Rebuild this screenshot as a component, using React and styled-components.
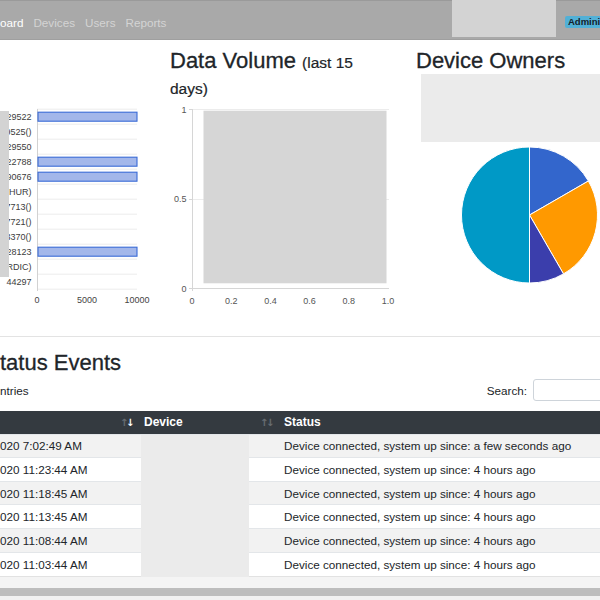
import React from 'react';
import styled, { createGlobalStyle } from 'styled-components';

const GlobalStyle = createGlobalStyle`
  html, body { margin: 0; padding: 0; background: #ffffff; overflow: hidden; }
  body {
    font-family: "Liberation Sans", Arial, Helvetica, sans-serif;
    color: #212529;
    width: 600px;
    height: 600px;
  }
  * { box-sizing: border-box; }
`;

const Page = styled.div`
  width: 600px;
  height: 600px;
  overflow: hidden;
`;

/* ---------- Navbar ---------- */
const Nav = styled.nav`
  display: flex;
  align-items: flex-start;
  height: 40px;
  background: #a9a9a9;
  border-top: 1px solid #9a9a9a;
  border-bottom: 1px solid #9f9f9f;
`;

const NavLinks = styled.div`
  flex: 1;
  display: flex;
  gap: 10px;
  align-items: center;
  height: 100%;
  padding-top: 4px;
  font-size: 11.7px;
  white-space: nowrap;
`;

const NavLink = styled.span`
  color: ${(p) => (p.$active ? '#ffffff' : '#d4d4d4')};
`;

const NavRight = styled.div`
  width: 148px;
  flex-shrink: 0;
  display: flex;
  align-items: flex-start;
  height: 100%;
`;

const NavRedaction = styled.div`
  width: 104px;
  height: 37px;
  margin-top: -1px;
  background: #d3d3d3;
  flex-shrink: 0;
`;

const Badge = styled.span`
  margin-left: 9px;
  margin-top: 15px;
  flex-shrink: 0;
  background: #52b0d6;
  color: #14202a;
  font-size: 9.5px;
  font-weight: 700;
  line-height: 10px;
  padding: 1px 3px;
  border-radius: 2px;
  white-space: nowrap;
`;

/* ---------- Charts row ---------- */
const Charts = styled.section`
  display: grid;
  grid-template-columns: 140px 216px 184px;
  column-gap: 30px;
  padding-top: 8px;
  align-items: start;
`;

const Column = styled.div`
  display: flex;
  flex-direction: column;
  min-width: 0;
`;

const Title = styled.h3`
  margin: 0;
  font-size: 22px;
  font-weight: 500;
  line-height: 1.2;
  color: #212529;
  -webkit-text-stroke: 0.3px #212529;
  white-space: ${(p) => (p.$nowrap ? 'nowrap' : 'normal')};
`;

const Small = styled.small`
  font-size: 15.5px;
  font-weight: 400;
  -webkit-text-stroke: 0.2px #212529;
`;

const ChartSvg = styled.svg`
  display: block;
  overflow: visible;
  margin-top: ${(p) => p.$offset || 0}px;
  font-family: "Liberation Sans", Arial, sans-serif;
`;

const OwnersRedaction = styled.div`
  margin-left: 5px;
  width: 190px;
  height: 68px;
  background: #ebebeb;
`;

const Divider = styled.hr`
  margin: 25px 0 0;
  border: 0;
  border-top: 1px solid #e3e3e3;
  height: 0;
`;

/* ---------- Status events ---------- */
const SectionTitle = styled.h2`
  margin: 13px 0 0;
  font-size: 22px;
  font-weight: 500;
  line-height: 26.4px;
  -webkit-text-stroke: 0.3px #212529;
  white-space: nowrap;
`;

const Controls = styled.div`
  display: flex;
  justify-content: space-between;
  align-items: center;
  margin-top: 2.6px;
  font-size: 11.7px;
  color: #212529;
`;

const Filter = styled.label`
  display: flex;
  align-items: center;
  gap: 6px;
  margin-right: -25px;
`;

const SearchInput = styled.input`
  width: 92px;
  height: 22px;
  border: 1px solid #ced4da;
  border-radius: 3px;
  padding: 0 6px;
  font: inherit;
`;

const TableWrap = styled.div`
  position: relative;
  margin-top: 10px;
  width: 660px;
`;

const Table = styled.table`
  width: 660px;
  border-collapse: collapse;
  table-layout: fixed;
`;

const HeadCell = styled.th`
  height: 23px;
  padding: 0 6px;
  background: #343a40;
  color: #ffffff;
  font-size: 12px;
  font-weight: 700;
  text-align: left;
  white-space: nowrap;
  vertical-align: middle;
`;

const HeadInner = styled.div`
  display: flex;
  align-items: center;
  justify-content: space-between;
`;

const SortIcons = styled.span`
  display: inline-flex;
  font-size: 10px;
  font-family: "DejaVu Sans", sans-serif;
  font-weight: 700;
`;

const Arrow = styled.span`
  width: 6px;
  display: inline-block;
  text-align: center;
  opacity: ${(p) => (p.$on ? 1 : 0.25)};
`;

const Row = styled.tr`
  background: ${(p) => (p.$striped ? '#f2f2f2' : '#ffffff')};
`;

const Cell = styled.td`
  height: 23.67px;
  padding: 0 6px 0 ${(p) => (p.$flush ? 0 : 6)}px;
  border-top: 1px solid #e3e6e9;
  font-size: 11.7px;
  color: #212529;
  white-space: nowrap;
  overflow: hidden;
  vertical-align: middle;
`;

const DeviceRedaction = styled.div`
  position: absolute;
  top: 24px;
  left: 141px;
  width: 108px;
  height: 142px;
  background: #ebebeb;
`;

const ScrollFoot = styled.div`
  height: 12px;
  background: #f4f4f4;
  border-top: 1px solid #e2e2e2;
`;

const ScrollTrack = styled.div`
  height: 14px;
  background: #f1f1f1;
`;

const ScrollThumb = styled.div`
  height: 8px;
  background: #bdbdbd;
`;

/* ---------- Data ---------- */
const barLabels = ['29522', '9525()', '29550', '22788', '90676', 'THUR)', '7713()', '7721()', '3370()', '28123', 'RDIC)', '44297'];
const filledRows = [0, 3, 4, 9];

const events = [
  ['020 7:02:49 AM', 'Device connected, system up since: a few seconds ago'],
  ['020 11:23:44 AM', 'Device connected, system up since: 4 hours ago'],
  ['020 11:18:45 AM', 'Device connected, system up since: 4 hours ago'],
  ['020 11:13:45 AM', 'Device connected, system up since: 4 hours ago'],
  ['020 11:08:44 AM', 'Device connected, system up since: 4 hours ago'],
  ['020 11:03:44 AM', 'Device connected, system up since: 4 hours ago'],
];

function BarChart() {
  const center = (i) => 116.7 + 15 * i;
  return (
    <ChartSvg width="160" height="210" viewBox="0 101 160 210" $offset={53}>
      {Array.from({ length: 13 }).map((_, k) => (
        <line key={k} x1="37" x2="137" y1={109.2 + 15 * k} y2={109.2 + 15 * k} stroke="#ececec" strokeWidth="1" />
      ))}
      <line x1="37.5" x2="37.5" y1="109" y2="291" stroke="#d2d2d2" strokeWidth="1" />
      {filledRows.map((i) => (
        <rect key={i} x="38" y={center(i) - 4.5} width="99" height="9" fill="#a3b7ea" stroke="#3a6bd6" strokeWidth="1.1" />
      ))}
      {barLabels.map((l, i) => (
        <text key={l} x="31.5" y={center(i) + 3.2} textAnchor="end" fontSize="9" fill="#3c3c3c">{l}</text>
      ))}
      {[['0', 37], ['5000', 87], ['10000', 137]].map(([t, x]) => (
        <text key={t} x={x} y="303" textAnchor="middle" fontSize="9" fill="#444">{t}</text>
      ))}
      <rect x="0" y="111" width="9" height="166" fill="#d3d3d3" />
    </ChartSvg>
  );
}

function VolumeChart() {
  const xs = [['0', 192], ['0.2', 231.2], ['0.4', 270.4], ['0.6', 309.6], ['0.8', 348.8], ['1.0', 388]];
  return (
    <ChartSvg width="230" height="210" viewBox="170 101 230 210">
      <line x1="192" x2="389" y1="109.5" y2="109.5" stroke="#ececec" />
      <line x1="192" x2="389" y1="199.5" y2="199.5" stroke="#ececec" />
      <line x1="189" x2="389" y1="288.5" y2="288.5" stroke="#d6d6d6" />
      <line x1="192.5" x2="192.5" y1="109" y2="291" stroke="#d6d6d6" />
      <line x1="189" x2="192" y1="109.5" y2="109.5" stroke="#d6d6d6" />
      <line x1="189" x2="192" y1="199.5" y2="199.5" stroke="#d6d6d6" />
      <rect x="203.5" y="110.7" width="183" height="172.6" fill="#d6d6d6" />
      {[['1', 112.5], ['0.5', 202], ['0', 291.5]].map(([t, y]) => (
        <text key={t} x="186.5" y={y} textAnchor="end" fontSize="9" fill="#555">{t}</text>
      ))}
      {xs.map(([t, x]) => (
        <text key={t} x={x} y="303.5" textAnchor="middle" fontSize="9" fill="#555">{t}</text>
      ))}
    </ChartSvg>
  );
}

function PieChart() {
  const cx = 529.5, cy = 215, r = 68;
  const pt = (deg) => {
    const a = (deg * Math.PI) / 180;
    return [cx + r * Math.sin(a), cy - r * Math.cos(a)];
  };
  const slice = (a0, a1) => {
    const [x0, y0] = pt(a0);
    const [x1, y1] = pt(a1);
    const large = a1 - a0 > 180 ? 1 : 0;
    return `M${cx} ${cy} L${x0} ${y0} A${r} ${r} 0 ${large} 1 ${x1} ${y1} Z`;
  };
  const slices = [
    [0, 60, '#3366cc'],
    [60, 150, '#ff9900'],
    [150, 180, '#3b3eac'],
    [180, 359.999, '#0099c6'],
  ];
  return (
    <ChartSvg width="184" height="150" viewBox="416 142 184 150">
      {slices.map(([a0, a1, c]) => (
        <path key={c} d={slice(a0, a1)} fill={c} stroke="#ffffff" strokeWidth="1" />
      ))}
    </ChartSvg>
  );
}

export default function App() {
  return (
    <Page>
      <GlobalStyle />
      <Nav>
        <NavLinks>
          <NavLink $active>oard</NavLink>
          <NavLink>Devices</NavLink>
          <NavLink>Users</NavLink>
          <NavLink>Reports</NavLink>
        </NavLinks>
        <NavRight>
          <NavRedaction />
          <Badge>Administrator</Badge>
        </NavRight>
      </Nav>

      <Charts>
        <Column>
          <BarChart />
        </Column>
        <Column>
          <Title>
            Data Volume <Small>(last 15 days)</Small>
          </Title>
          <VolumeChart />
        </Column>
        <Column>
          <Title $nowrap>Device Owners</Title>
          <OwnersRedaction />
          <PieChart />
        </Column>
      </Charts>

      <Divider />

      <SectionTitle>tatus Events</SectionTitle>
      <Controls>
        <span>ntries</span>
        <Filter>
          Search:
          <SearchInput type="search" />
        </Filter>
      </Controls>

      <TableWrap>
        <Table>
          <colgroup>
            <col style={{ width: 138 }} />
            <col style={{ width: 140 }} />
            <col style={{ width: 382 }} />
          </colgroup>
          <thead>
            <tr>
              <HeadCell>
                <HeadInner>
                  <span />
                  <SortIcons>
                    <Arrow>↑</Arrow>
                    <Arrow $on>↓</Arrow>
                  </SortIcons>
                </HeadInner>
              </HeadCell>
              <HeadCell>
                <HeadInner>
                  <span>Device</span>
                  <SortIcons>
                    <Arrow>↑</Arrow>
                    <Arrow>↓</Arrow>
                  </SortIcons>
                </HeadInner>
              </HeadCell>
              <HeadCell>
                <HeadInner>
                  <span>Status</span>
                </HeadInner>
              </HeadCell>
            </tr>
          </thead>
          <tbody>
            {events.map(([time, status], i) => (
              <Row key={i} $striped={i % 2 === 0}>
                <Cell $flush>{time}</Cell>
                <Cell />
                <Cell>{status}</Cell>
              </Row>
            ))}
          </tbody>
        </Table>
        <DeviceRedaction />
        <ScrollFoot />
        <ScrollTrack>
          <ScrollThumb />
        </ScrollTrack>
      </TableWrap>
    </Page>
  );
}
